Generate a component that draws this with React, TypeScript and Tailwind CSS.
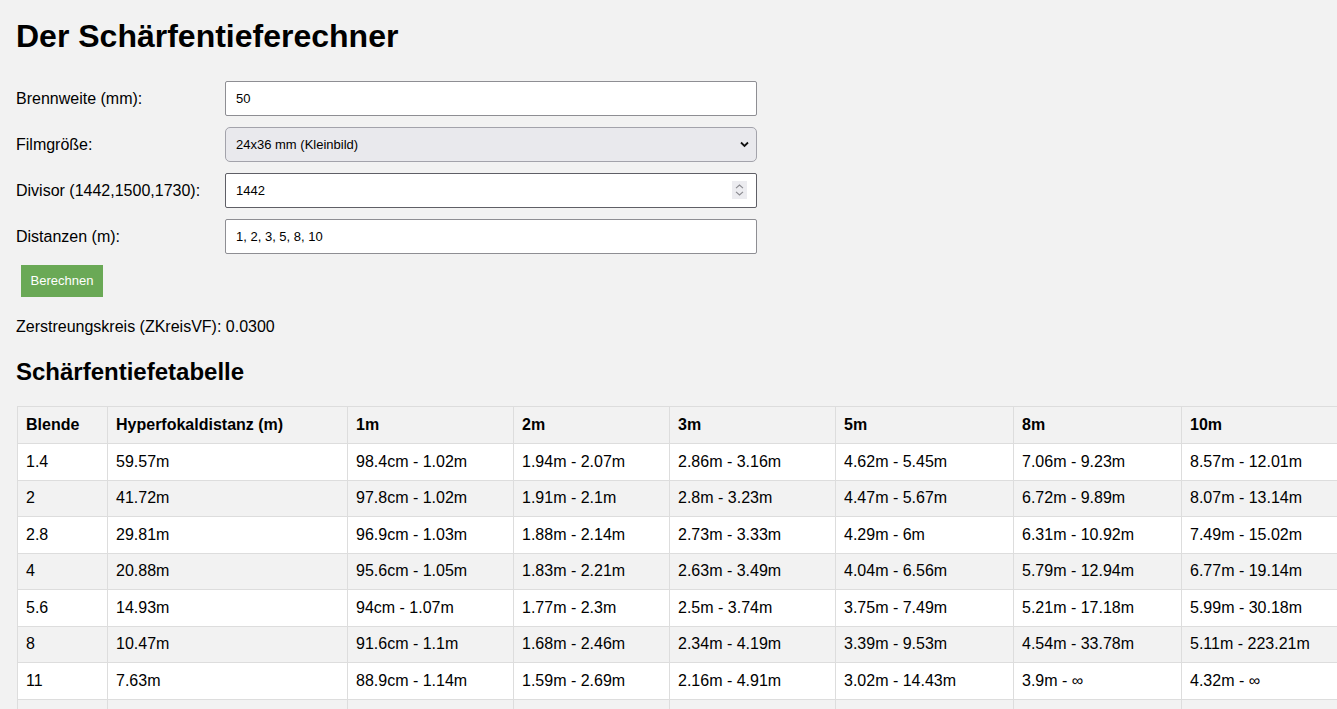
import React from "react";

// Schärfentiefe-Rechner – statische Ansicht der Ergebnisse
const distances = ["1m", "2m", "3m", "5m", "8m", "10m"];

const rows: string[][] = [
  ["1.4", "59.57m", "98.4cm - 1.02m", "1.94m - 2.07m", "2.86m - 3.16m", "4.62m - 5.45m", "7.06m - 9.23m", "8.57m - 12.01m"],
  ["2", "41.72m", "97.8cm - 1.02m", "1.91m - 2.1m", "2.8m - 3.23m", "4.47m - 5.67m", "6.72m - 9.89m", "8.07m - 13.14m"],
  ["2.8", "29.81m", "96.9cm - 1.03m", "1.88m - 2.14m", "2.73m - 3.33m", "4.29m - 6m", "6.31m - 10.92m", "7.49m - 15.02m"],
  ["4", "20.88m", "95.6cm - 1.05m", "1.83m - 2.21m", "2.63m - 3.49m", "4.04m - 6.56m", "5.79m - 12.94m", "6.77m - 19.14m"],
  ["5.6", "14.93m", "94cm - 1.07m", "1.77m - 2.3m", "2.5m - 3.74m", "3.75m - 7.49m", "5.21m - 17.18m", "5.99m - 30.18m"],
  ["8", "10.47m", "91.6cm - 1.1m", "1.68m - 2.46m", "2.34m - 4.19m", "3.39m - 9.53m", "4.54m - 33.78m", "5.11m - 223.21m"],
  ["11", "7.63m", "88.9cm - 1.14m", "1.59m - 2.69m", "2.16m - 4.91m", "3.02m - 14.43m", "3.9m - ∞", "4.32m - ∞"],
  ["16", "5.26m", "84.6cm - 1.22m", "1.46m - 3.2m", "1.92m - 6.92m", "2.56m - 100.82m", "3.17m - ∞", "3.44m - ∞"],
];

const colWidths = ["w-[90px]", "w-[240px]", "w-[166px]", "w-[156px]", "w-[166px]", "w-[178px]", "w-[168px]", "w-[170px]"];

function FormRow({ label, children }: { label: string; children: React.ReactNode }) {
  return (
    <div className="flex items-center">
      <label className="w-[209px] text-[16px] leading-[18px]">{label}</label>
      {children}
    </div>
  );
}

export default function App() {
  return (
    <div className="h-screen w-full overflow-hidden bg-[#f2f2f2] px-4 pt-[18px] font-['Liberation_Sans',Arial,sans-serif] text-black">
      <h1 className="mb-[26px] text-[32px] font-bold leading-[37px]">Der Schärfentieferechner</h1>

      <div className="flex flex-col gap-[11px]">
        <FormRow label="Brennweite (mm):">
          <input
            className="h-[35px] w-[532px] rounded-[2px] border border-[#8e8e93] bg-white px-[10px] text-[13px] outline-none"
            defaultValue="50"
          />
        </FormRow>

        <FormRow label="Filmgröße:">
          <div className="relative">
            <select
              className="h-[35px] w-[532px] appearance-none rounded-[5px] border border-[#a3a3ab] bg-[#e9e9ed] px-[10px] text-[13px] outline-none"
              defaultValue="kb"
            >
              <option value="kb">24x36 mm (Kleinbild)</option>
              <option value="mf">6x6 cm (Mittelformat)</option>
            </select>
            <svg
              className="pointer-events-none absolute right-[8px] top-[14px]"
              width="9"
              height="7"
              viewBox="0 0 9 7"
            >
              <path d="M1 1.5 L4.5 5 L8 1.5" fill="none" stroke="#111" strokeWidth="1.8" />
            </svg>
          </div>
        </FormRow>

        <FormRow label="Divisor (1442,1500,1730):">
          <div className="relative">
            <input
              className="h-[35px] w-[532px] rounded-[2px] border border-[#5f5f66] bg-white px-[10px] text-[13px] outline-none"
              defaultValue="1442"
            />
            <div className="pointer-events-none absolute right-[10px] top-[8px] flex h-[18px] w-[15px] flex-col items-center justify-center gap-[2px] bg-[#ececf0]">
              <svg width="9" height="5" viewBox="0 0 9 5">
                <path d="M1 4.2 L4.5 1 L8 4.2" fill="none" stroke="#8a8a90" strokeWidth="1.1" />
              </svg>
              <svg width="9" height="5" viewBox="0 0 9 5">
                <path d="M1 0.8 L4.5 4 L8 0.8" fill="none" stroke="#8a8a90" strokeWidth="1.1" />
              </svg>
            </div>
          </div>
        </FormRow>

        <FormRow label="Distanzen (m):">
          <input
            className="h-[35px] w-[532px] rounded-[2px] border border-[#8e8e93] bg-white px-[10px] text-[13px] outline-none"
            defaultValue="1, 2, 3, 5, 8, 10"
          />
        </FormRow>

        <div>
          <button className="ml-[5px] h-[32px] w-[82px] bg-[#6aa956] text-[13px] text-white">Berechnen</button>
        </div>
      </div>

      <p className="mt-[21px] text-[16px] leading-[18px]">Zerstreungskreis (ZKreisVF): 0.0300</p>

      <h2 className="mt-[22px] text-[24px] font-bold leading-[28px]">Schärfentiefetabelle</h2>

      <table className="ml-px mt-[20px] w-[1334px] table-fixed border-collapse text-[16px] leading-[18px]">
        <thead>
          <tr className="h-[37px] bg-[#f2f2f2]">
            {["Blende", "Hyperfokaldistanz (m)", ...distances].map((h, i) => (
              <th key={h} className={`${colWidths[i]} border border-[#dddddd] px-2 text-left font-bold`}>
                {h}
              </th>
            ))}
          </tr>
        </thead>
        <tbody>
          {rows.map((r) => (
            <tr key={r[0]} className="h-[36.5px] odd:bg-white even:bg-[#f2f2f2]">
              {r.map((c, j) => (
                <td key={j} className="border border-[#dddddd] px-2 whitespace-nowrap">
                  {c}
                </td>
              ))}
            </tr>
          ))}
        </tbody>
      </table>
    </div>
  );
}
